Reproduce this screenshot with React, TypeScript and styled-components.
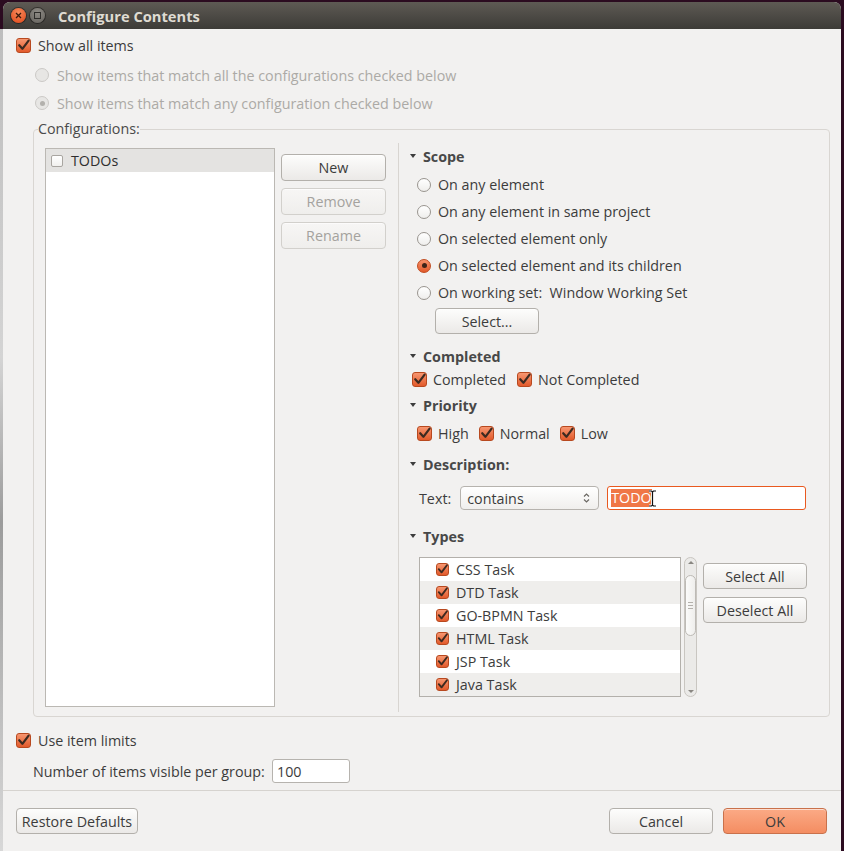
import React, { FC } from 'react'
import styled, { createGlobalStyle } from 'styled-components'

const GlobalStyle = createGlobalStyle`
  html, body {
    margin: 0;
    padding: 0;
  }
  body {
    background: #2c0c21;
    font-family: 'Open Sans', 'Noto Sans', sans-serif;
    font-size: 14.3px;
    color: #3c3c3c;
  }
`

const Screen = styled.div`
  width: 844px;
  height: 851px;
  display: flex;
  overflow: hidden;
  background: #2b0b20;
`

const BackdropStrip = styled.div`
  width: 3px;
  margin-top: 29px;
  background: linear-gradient(#bdbdbd, #d4d4d4 40%, #9c9c9c 60%, #d8d8d8);
`

const Window = styled.div`
  width: 838px;
  height: 849px;
  margin-top: 2px;
  display: flex;
  flex-direction: column;
  background: #f2f1f0;
  border-radius: 7px 7px 0 0;
  overflow: hidden;
`

const TitleBar = styled.header`
  height: 27px;
  flex: none;
  display: flex;
  align-items: center;
  padding-left: 8px;
  background: linear-gradient(#5e5a54, #3c3b37);
`

const WindowButton = styled.span<{ $close?: boolean }>`
  width: 15px;
  height: 15px;
  margin-right: 4px;
  border-radius: 50%;
  display: flex;
  align-items: center;
  justify-content: center;
  background: ${({ $close }) =>
    $close
      ? 'radial-gradient(circle at 50% 30%, #f7895a, #df4618)'
      : 'radial-gradient(circle at 50% 30%, #8e8b85, #64615c)'};
  box-shadow: 0 0 0 1px rgba(0, 0, 0, 0.4);
`

const Title = styled.span`
  margin-left: 9px;
  font-weight: bold;
  font-size: 14.7px;
  color: #dfdbd2;
`

const Main = styled.div`
  flex: none;
  display: flex;
  flex-direction: column;
  padding: 5px 11px 0 13px;
`

const Row = styled.div<{ $top?: number; $left?: number; $gap?: number; $h?: number }>`
  display: flex;
  align-items: center;
  height: ${({ $h }) => $h ?? 22}px;
  margin-top: ${({ $top }) => $top ?? 0}px;
  margin-left: ${({ $left }) => $left ?? 0}px;
  gap: ${({ $gap }) => $gap ?? 0}px;
  white-space: pre;
`

const Label = styled.span<{ $disabled?: boolean }>`
  color: ${({ $disabled }) => ($disabled ? '#acaaa6' : '#3c3c3c')};
`

const CheckBox = styled.span<{ $size?: number }>`
  flex: none;
  position: relative;
  width: ${({ $size }) => $size ?? 15}px;
  height: ${({ $size }) => $size ?? 15}px;
  box-sizing: border-box;
  border: 1px solid #b8491f;
  border-radius: 3px;
  background: linear-gradient(#f79670, #e25a2b);
  display: flex;
  align-items: center;
  justify-content: center;
`

const EmptyBox = styled.span`
  flex: none;
  width: 12px;
  height: 12px;
  box-sizing: border-box;
  border: 1px solid #a9a6a1;
  border-radius: 2px;
  background: linear-gradient(#ffffff, #f1f0ee);
`

const RadioDot = styled.span<{ $on?: boolean; $disabled?: boolean }>`
  flex: none;
  width: 14px;
  height: 14px;
  box-sizing: border-box;
  border-radius: 50%;
  display: flex;
  align-items: center;
  justify-content: center;
  border: 1px solid
    ${({ $on, $disabled }) => ($disabled ? '#cbc9c6' : $on ? '#c14b1f' : '#99958f')};
  background: ${({ $on, $disabled }) =>
    $disabled
      ? '#e7e6e4'
      : $on
      ? 'linear-gradient(#f7926b, #e25a2b)'
      : 'linear-gradient(#ffffff, #efeeec)'};

  &::after {
    content: '';
    display: ${({ $on }) => ($on ? 'block' : 'none')};
    width: 5px;
    height: 5px;
    border-radius: 50%;
    background: ${({ $disabled }) => ($disabled ? '#b3b1ad' : '#3d2418')};
  }
`

const Button = styled.button<{ $w: number; $h?: number; $primary?: boolean }>`
  flex: none;
  width: ${({ $w }) => $w}px;
  height: ${({ $h }) => $h ?? 26}px;
  padding: 0;
  font-family: inherit;
  font-size: 14.3px;
  color: #3c3c3c;
  border-radius: 4px;
  border: 1px solid ${({ $primary }) => ($primary ? '#c9714b' : '#b3b0ab')};
  background: ${({ $primary }) =>
    $primary ? 'linear-gradient(#fbaa86, #f48d62)' : 'linear-gradient(#fdfdfc, #ebe9e7)'};
  box-shadow: inset 0 1px 0 rgba(255, 255, 255, 0.6);

  &:disabled {
    color: #a4a29e;
    border-color: #d2d0cc;
    background: linear-gradient(#f7f6f5, #efeeec);
  }
`

const Group = styled.fieldset`
  margin: 6px 0 0 17px;
  padding: 0 0 9px 0;
  border: 1px solid #d9d6d2;
  border-radius: 4px;
  min-width: 0;
`

const GroupLabel = styled.legend`
  padding: 0;
  margin-left: 4px;
  line-height: 18px;
  color: #4a4a4a;
`

const GroupBody = styled.div`
  display: flex;
  padding: 10px 0 0 11px;
`

const ConfigList = styled.div`
  width: 230px;
  height: 559px;
  box-sizing: border-box;
  border: 1px solid #bbb8b3;
  background: #ffffff;
`

const ConfigRow = styled.div`
  height: 23px;
  display: flex;
  align-items: center;
  gap: 8px;
  padding-left: 5px;
  background: #e4e3e1;
  color: #2e2e2e;
`

const ButtonColumn = styled.div<{ $gap: number; $left: number }>`
  display: flex;
  flex-direction: column;
  gap: ${({ $gap }) => $gap}px;
  margin-left: ${({ $left }) => $left}px;
  padding-top: 6px;
`

const Divider = styled.div`
  width: 1px;
  margin: -5px 0 -5px 12px;
  background: #d8d5d1;
`

const Pane = styled.div`
  flex: 1;
  display: flex;
  flex-direction: column;
  padding-left: 11px;
`

const SectionHead = styled.div<{ $top: number }>`
  height: 18px;
  margin-top: ${({ $top }) => $top}px;
  display: flex;
  align-items: center;
  gap: 7px;
  font-weight: bold;
  color: #484848;
`

const Arrow = styled.span`
  width: 0;
  height: 0;
  border-left: 3.5px solid transparent;
  border-right: 3.5px solid transparent;
  border-top: 4px solid #3c3c3c;
`

const RadioList = styled.div`
  display: flex;
  flex-direction: column;
  margin-left: 7px;
`

const Combo = styled.div`
  width: 139px;
  height: 24px;
  box-sizing: border-box;
  margin-left: 9px;
  padding: 0 8px 0 6px;
  display: flex;
  align-items: center;
  justify-content: space-between;
  border: 1px solid #b6b3ae;
  border-radius: 4px;
  background: linear-gradient(#ffffff, #f0efed);
`

const TextField = styled.div`
  position: relative;
  width: 199px;
  height: 24px;
  box-sizing: border-box;
  margin-left: 8px;
  padding-left: 3px;
  display: flex;
  align-items: center;
  border: 1px solid #e9591f;
  border-radius: 3px;
  background: #ffffff;
`

const Selected = styled.span`
  background: #f07746;
  color: #ffffff;
  line-height: 18px;
`

const Cursor = styled.svg`
  position: absolute;
  left: 40px;
  top: 3px;
`

const TypesArea = styled.div`
  display: flex;
  margin: 12px 0 0 9px;
`

const TypesList = styled.div`
  width: 262px;
  height: 140px;
  box-sizing: border-box;
  border: 1px solid #b3b0ab;
  background: #ffffff;
`

const TypeRow = styled.div<{ $odd: boolean }>`
  height: 23px;
  display: flex;
  align-items: center;
  gap: 7px;
  padding-left: 16px;
  background: ${({ $odd }) => ($odd ? '#efeeec' : '#ffffff')};
`

const ScrollTrack = styled.div`
  width: 13px;
  height: 140px;
  box-sizing: border-box;
  margin-left: 3px;
  border: 1px solid #c9c6c1;
  border-radius: 7px;
  background: #ebeae8;
  display: flex;
  flex-direction: column;
  align-items: center;
`

const ScrollThumb = styled.div`
  width: 11px;
  height: 61px;
  margin-top: 11px;
  box-sizing: border-box;
  border: 1px solid #bdbab5;
  border-radius: 6px;
  background: linear-gradient(90deg, #fbfbfa, #efeeec);
  display: flex;
  flex-direction: column;
  align-items: center;
  justify-content: center;
  gap: 2px;
`

const Grip = styled.span`
  width: 5px;
  height: 1px;
  background: #b4b1ac;
`

const ScrollArrow = styled.span<{ $down?: boolean }>`
  margin-top: ${({ $down }) => ($down ? 'auto' : '3px')};
  margin-bottom: ${({ $down }) => ($down ? '3px' : '0')};
  width: 0;
  height: 0;
  border-left: 3px solid transparent;
  border-right: 3px solid transparent;
  ${({ $down }) => ($down ? 'border-top: 3px solid #8a8782;' : 'border-bottom: 3px solid #8a8782;')}
`

const NumberInput = styled.div`
  width: 78px;
  height: 24px;
  box-sizing: border-box;
  margin-left: auto;
  margin-right: 480px;
  padding-left: 4px;
  display: flex;
  align-items: center;
  border: 1px solid #b6b3ae;
  border-radius: 3px;
  background: #ffffff;
`

const Footer = styled.footer`
  margin-top: 7px;
  border-top: 1px solid #d6d3cf;
  padding: 17px 14px 0 13px;
  display: flex;
  gap: 10px;
`

const Spacer = styled.div`
  flex: 1;
`

const Check: FC<{ size?: number }> = ({ size = 15 }) => (
  <CheckBox $size={size}>
    <svg width={size} height={size} viewBox="0 0 15 15" style={{ overflow: 'visible' }}>
      <path d="M3.2 7.2 L6.4 10.8 L12.6 2.6" fill="none" stroke="#3d2a20" strokeWidth="2.2" strokeLinecap="round" strokeLinejoin="round" />
    </svg>
  </CheckBox>
)

const CheckItem: FC<{ label: string; gap?: number }> = ({ label, gap = 6 }) => (
  <Row $gap={gap}>
    <Check />
    <Label>{label}</Label>
  </Row>
)

const Radio: FC<{ label: string; on?: boolean; disabled?: boolean; left?: number; top?: number; h?: number }> = ({
  label,
  on,
  disabled,
  left,
  top,
  h,
}) => (
  <Row $gap={disabled ? 8 : 7} $left={left} $top={top} $h={h}>
    <RadioDot $on={on} $disabled={disabled} />
    <Label $disabled={disabled}>{label}</Label>
  </Row>
)

const scopes = [
  'On any element',
  'On any element in same project',
  'On selected element only',
  'On selected element and its children',
  'On working set:  Window Working Set',
]

const types = ['CSS Task', 'DTD Task', 'GO-BPMN Task', 'HTML Task', 'JSP Task', 'Java Task']

export default function App() {
  return (
    <Screen>
      <GlobalStyle />
      <BackdropStrip />
      <Window>
        <TitleBar>
          <WindowButton $close>
            <svg width="7" height="7" viewBox="0 0 7 7">
              <path d="M1 1 L6 6 M6 1 L1 6" stroke="#3b1a0c" strokeWidth="1.3" />
            </svg>
          </WindowButton>
          <WindowButton>
            <svg width="7" height="7" viewBox="0 0 7 7">
              <rect x="0.5" y="0.5" width="6" height="6" fill="none" stroke="#2e2d2a" strokeWidth="1" />
            </svg>
          </WindowButton>
          <Title>Configure Contents</Title>
        </TitleBar>

        <Main>
          <Row $gap={7}>
            <Check />
            <Label>Show all items</Label>
          </Row>
          <Radio label="Show items that match all the configurations checked below" disabled left={19} top={8} />
          <Radio label="Show items that match any configuration checked below" disabled on left={19} top={6} />

          <Group>
            <GroupLabel>Configurations:</GroupLabel>
            <GroupBody>
              <ConfigList>
                <ConfigRow>
                  <EmptyBox />
                  <span>TODOs</span>
                </ConfigRow>
              </ConfigList>
              <ButtonColumn $gap={7} $left={6}>
                <Button $w={105} $h={27}>New</Button>
                <Button $w={105} $h={27} disabled>Remove</Button>
                <Button $w={105} $h={27} disabled>Rename</Button>
              </ButtonColumn>
              <Divider />
              <Pane>
                <SectionHead $top={-1}>
                  <Arrow />
                  Scope
                </SectionHead>
                <RadioList>
                  {scopes.map((s, i) => (
                    <Radio key={s} label={s} on={i === 3} h={27} top={i === 0 ? 6 : 0} />
                  ))}
                </RadioList>
                <Row $top={2} $left={25} $h={26}>
                  <Button $w={104}>Select...</Button>
                </Row>

                <SectionHead $top={13}>
                  <Arrow />
                  Completed
                </SectionHead>
                <Row $top={3} $left={2} $gap={11}>
                  <CheckItem label="Completed" />
                  <CheckItem label="Not Completed" />
                </Row>

                <SectionHead $top={6}>
                  <Arrow />
                  Priority
                </SectionHead>
                <Row $top={8} $left={7} $gap={10}>
                  <CheckItem label="High" />
                  <CheckItem label="Normal" />
                  <CheckItem label="Low" />
                </Row>

                <SectionHead $top={11}>
                  <Arrow />
                  Description:
                </SectionHead>
                <Row $top={13} $left={9} $h={24}>
                  <Label>Text:</Label>
                  <Combo>
                    <span>contains</span>
                    <svg width="7" height="12" viewBox="0 0 7 12">
                      <path d="M1 4.5 L3.5 2 L6 4.5 M1 7.5 L3.5 10 L6 7.5" fill="none" stroke="#6b6863" strokeWidth="1.2" />
                    </svg>
                  </Combo>
                  <TextField>
                    <Selected>TODO</Selected>
                    <Cursor width="9" height="17" viewBox="0 0 9 17">
                      <path
                        d="M1 1 H3.5 L4.5 2 L5.5 1 H8 M4.5 2 V15 M1 16 H3.5 L4.5 15 L5.5 16 H8"
                        fill="none"
                        stroke="#ffffff"
                        strokeWidth="3"
                      />
                      <path
                        d="M1 1 H3.5 L4.5 2 L5.5 1 H8 M4.5 2 V15 M1 16 H3.5 L4.5 15 L5.5 16 H8"
                        fill="none"
                        stroke="#111111"
                        strokeWidth="1.2"
                      />
                    </Cursor>
                  </TextField>
                </Row>

                <SectionHead $top={17}>
                  <Arrow />
                  Types
                </SectionHead>
                <TypesArea>
                  <TypesList>
                    {types.map((t, i) => (
                      <TypeRow key={t} $odd={i % 2 === 1}>
                        <Check size={13} />
                        <span>{t}</span>
                      </TypeRow>
                    ))}
                  </TypesList>
                  <ScrollTrack>
                    <ScrollArrow />
                    <ScrollThumb>
                      <Grip />
                      <Grip />
                      <Grip />
                    </ScrollThumb>
                    <ScrollArrow $down />
                  </ScrollTrack>
                  <ButtonColumn $gap={8} $left={6}>
                    <Button $w={104}>Select All</Button>
                    <Button $w={104}>Deselect All</Button>
                  </ButtonColumn>
                </TypesArea>
              </Pane>
            </GroupBody>
          </Group>

          <Row $top={12} $gap={7}>
            <Check />
            <Label>Use item limits</Label>
          </Row>
          <Row $top={8} $left={17} $h={24}>
            <Label>Number of items visible per group:</Label>
            <NumberInput>100</NumberInput>
          </Row>
        </Main>

        <Footer>
          <Button $w={122}>Restore Defaults</Button>
          <Spacer />
          <Button $w={104}>Cancel</Button>
          <Button $w={104} $primary>
            OK
          </Button>
        </Footer>
      </Window>
    </Screen>
  )
}
